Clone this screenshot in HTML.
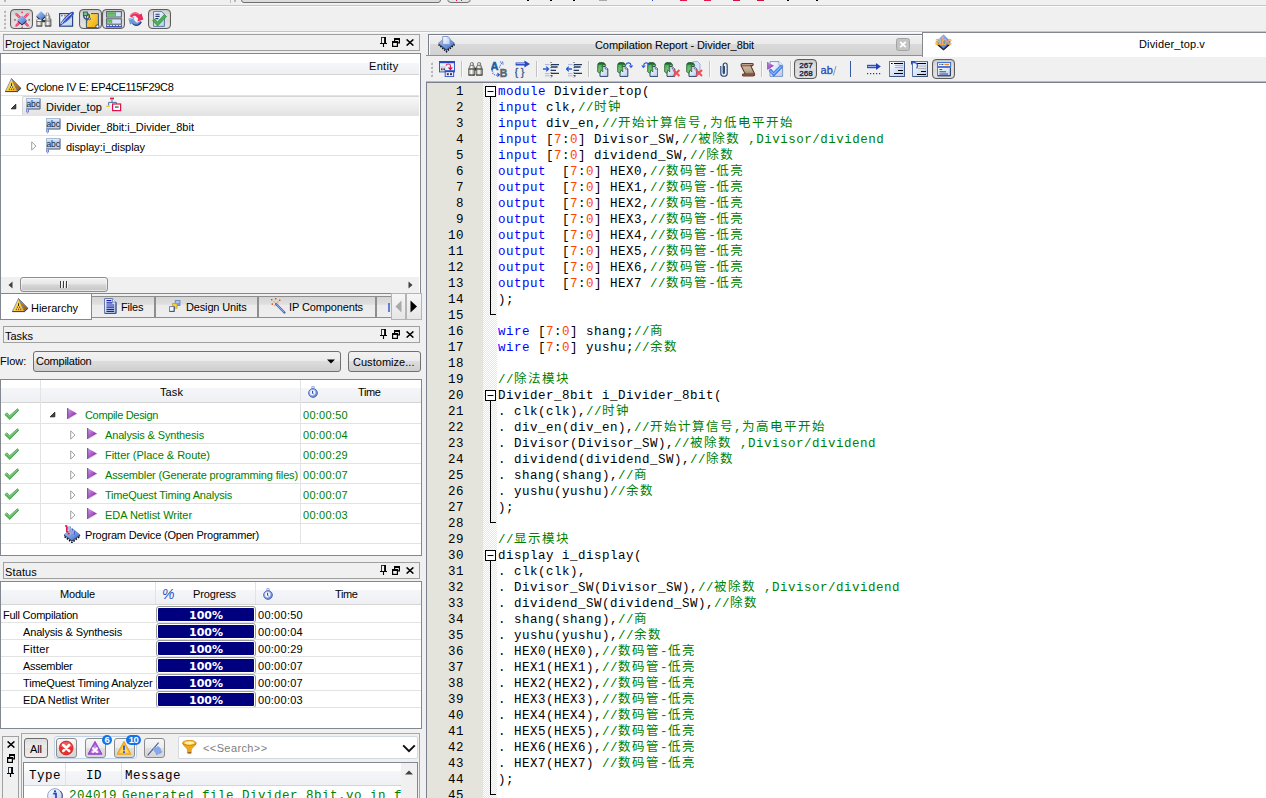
<!DOCTYPE html>
<html lang="zh"><head><meta charset="utf-8"><title>Quartus II</title>
<style>
*{box-sizing:border-box;margin:0;padding:0}
html,body{width:1266px;height:798px;overflow:hidden;background:#f0f0f0;}
body{position:relative;font-family:"Liberation Sans","Noto Sans CJK SC",sans-serif;font-size:11px;color:#000;}
.a{position:absolute}
.t{position:absolute;white-space:nowrap;line-height:14px;height:14px}
.box{position:absolute;border:1px solid #a0a0a0;background:#f0f0f0}
.panel{position:absolute;border:1px solid #828790;background:#fff}
.hl{position:absolute;height:1px;background:#e3e3e3}
.vl{position:absolute;width:1px;background:#e3e3e3}
.hdr{position:absolute;background:linear-gradient(#fff 0,#fff 36%,#f5f6f9 36%,#eef0f4 100%);border-bottom:1px solid #d5d5d5}
.hdr2{position:absolute;background:linear-gradient(#f5f6f9,#eef0f4);border-bottom:1px solid #d5d5d5}
.btnp{position:absolute;border:1px solid #8a8a8a;border-radius:3px;background:linear-gradient(#dcdcdc,#e8e8e8)}
.g{color:#008000}
.code{position:absolute;left:498px;font-family:"Liberation Mono","Noto Sans CJK SC",monospace;font-size:12.5px;letter-spacing:0.5px;line-height:16px;height:16px;white-space:pre;color:#000}
.ln{position:absolute;left:427px;width:37px;text-align:right;font-family:"Liberation Mono","Noto Sans CJK SC",monospace;font-size:12.5px;letter-spacing:0.5px;line-height:16px;height:16px;color:#000}
.k{color:#0000ff} .n{color:#ff4500} .c{color:#008000}
.cj{font-size:12.5px;letter-spacing:1.5px}
.pb{position:absolute;left:156px;width:100px;height:17px;border:1px solid #9a9a9a;border-radius:3px;background:#fff;padding:1px}
.pb i{display:block;width:100%;height:100%;background:#00007f;border-radius:1px}
.m{font-family:"Liberation Mono","Noto Sans CJK SC",monospace;font-size:12.5px;letter-spacing:0.5px}
.pbt{position:absolute;left:156px;width:100px;text-align:center;color:#fff;font-weight:bold;font-size:11px;line-height:17px;height:17px;font-family:"DejaVu Sans","Liberation Sans",sans-serif}
</style></head>
<body>
<div class="a" style="left:0;top:5px;width:1266px;height:1px;background:#c6c6c6"></div>
<div class="a" style="left:0;top:6px;width:1266px;height:1px;background:#fbfbfb"></div>
<div class="a" style="left:0;top:31px;width:1266px;height:1px;background:#c6c6c6"></div>
<div class="a" style="left:0;top:32px;width:1266px;height:1px;background:#fbfbfb"></div>
<div class="a" style="left:241px;top:-18px;width:200px;height:21px;border:1px solid #707070;border-radius:3px;background:#dcdcdc"></div>
<div class="a" style="left:447px;top:-18px;width:24px;height:21px;border:1px solid #707070;border-radius:4px;background:#e4e4e4"></div>
<div class="a" style="left:230px;top:0;width:1px;height:3px;background:#c0c0c0"></div>
<div class="a" style="left:4px;top:0;width:2px;height:2px;background:#b8b8b8"></div><div class="a" style="left:234px;top:0;width:2px;height:2px;background:#b8b8b8"></div>
<div class="a" style="left:527px;top:0;width:2px;height:1px;background:#000"></div>
<div class="a" style="left:550px;top:0;width:2px;height:1px;background:#000"></div>
<div class="a" style="left:573px;top:0;width:2px;height:1px;background:#000"></div>
<div class="a" style="left:599px;top:0;width:8px;height:1px;background:#a8a8a8"></div>
<div class="a" style="left:652px;top:0;width:1px;height:1px;background:#2848c8"></div>
<div class="a" style="left:680px;top:0;width:7px;height:1px;background:#e01848"></div>
<div class="a" style="left:704px;top:0;width:7px;height:1px;background:#e01848"></div>
<div class="a" style="left:733px;top:0;width:7px;height:1px;background:#d01040"></div>
<div class="a" style="left:757px;top:0;width:7px;height:1px;background:#d01040"></div>
<div class="a" style="left:787px;top:0;width:2px;height:1px;background:#000"></div>
<div class="a" style="left:816px;top:0;width:2px;height:1px;background:#000"></div>
<div class="a" style="left:456px;top:0;width:1px;height:1px;background:#e01848"></div>
<div class="a" style="left:461px;top:0;width:1px;height:1px;background:#e01848"></div>
<div class="box" style="left:3px;top:34px;width:417px;height:17px"></div>
<div class="t" style="left:5px;top:37px;letter-spacing:0.037px;">Project Navigator</div>
<div class="panel" style="left:0;top:53px;width:421px;height:241px"></div>
<div class="hdr2" style="left:1px;top:63px;width:418px;height:12px"></div>
<div class="t" style="left:369px;top:59px;letter-spacing:0.331px;">Entity</div>
<div class="t" style="left:26px;top:80px;letter-spacing:-0.327px;">Cyclone IV E: EP4CE115F29C8</div>
<div class="hl" style="left:1px;top:95px;width:418px"></div>
<div class="a" style="left:22px;top:96px;width:397px;height:20px;background:linear-gradient(#f8f8f8,#e3e3e3);border:1px solid #d6d6d6;border-right:none;border-radius:2px 0 0 2px"></div>
<div class="t" style="left:46px;top:100px;letter-spacing:0.033px;">Divider_top</div>
<div class="hl" style="left:1px;top:115px;width:418px"></div>
<div class="t" style="left:66px;top:120px;letter-spacing:0.008px;">Divider_8bit:i_Divider_8bit</div>
<div class="hl" style="left:1px;top:135px;width:418px"></div>
<div class="t" style="left:66px;top:140px;letter-spacing:-0.065px;">display:i_display</div>
<div class="hl" style="left:1px;top:155px;width:418px"></div>
<div class="a" style="left:1px;top:277px;width:418px;height:16px;background:#f0f0f0"></div>
<div class="a" style="left:20px;top:277px;width:88px;height:15px;border:1px solid #8e8e8e;border-radius:3px;background:linear-gradient(#f3f3f3,#e6e6e6 48%,#d6d6d6 52%,#c6c6c6);box-shadow:inset 0 0 0 1px rgba(255,255,255,.5)"></div>
<div class="a" style="left:91px;top:296px;width:64px;height:22px;border:1px solid #8e8e8e;background:linear-gradient(#d4d4d4,#dfdfdf 36%,#ebebeb 42%,#eeeeee)"></div>
<div class="a" style="left:155px;top:296px;width:103px;height:22px;border:1px solid #8e8e8e;background:linear-gradient(#d4d4d4,#dfdfdf 36%,#ebebeb 42%,#eeeeee)"></div>
<div class="a" style="left:258px;top:296px;width:118px;height:22px;border:1px solid #8e8e8e;background:linear-gradient(#d4d4d4,#dfdfdf 36%,#ebebeb 42%,#eeeeee)"></div>
<div class="a" style="left:376px;top:296px;width:17px;height:22px;border:1px solid #8e8e8e;background:linear-gradient(#d4d4d4,#dfdfdf 36%,#ebebeb 42%,#eeeeee)"></div>
<div class="a" style="left:0;top:294px;width:92px;height:26px;background:#fff;border:1px solid #828790;border-top:none"></div>
<div class="t" style="left:31px;top:301px;letter-spacing:-0.009px;">Hierarchy</div>
<div class="t" style="left:121px;top:300px;letter-spacing:-0.187px;">Files</div>
<div class="t" style="left:186px;top:300px;letter-spacing:-0.155px;">Design Units</div>
<div class="t" style="left:289px;top:300px;letter-spacing:-0.125px;">IP Components</div>
<div class="a" style="left:391px;top:293px;width:15px;height:27px;border:1px solid #b4b4b4;background:linear-gradient(#f6f6f6,#e6e6e6)"></div>
<div class="a" style="left:406px;top:293px;width:16px;height:27px;border:1px solid #b4b4b4;background:linear-gradient(#f6f6f6,#e6e6e6)"></div>
<svg class="a" style="left:395px;top:300px" width="7" height="13" viewBox="0 0 7 13"><path d="M6.5 .5V12.5L.5 6.5Z" fill="#a8a8a8"/></svg>
<svg class="a" style="left:410px;top:300px" width="8" height="13" viewBox="0 0 8 13"><path d="M.5 .5V12.5L7 6.5Z" fill="#000"/></svg>
<svg class="a" style="left:8px;top:281px" width="5" height="8" viewBox="0 0 5 8"><path d="M4.5 .5V7.5L.5 4Z" fill="#404040"/></svg>
<svg class="a" style="left:408px;top:281px" width="5" height="8" viewBox="0 0 5 8"><path d="M.5 .5V7.5L4.5 4Z" fill="#404040"/></svg>
<svg class="a" style="left:60px;top:281px" width="9" height="7" viewBox="0 0 9 7"><path d="M.5 0V7M3.5 0V7M6.5 0V7" stroke="#3c3c3c" stroke-width="1"/><path d="M1.5 0V7M4.5 0V7M7.5 0V7" stroke="#f8f8f8" stroke-width="1"/></svg>
<div class="box" style="left:3px;top:326px;width:417px;height:17px"></div>
<div class="t" style="left:5px;top:329px;letter-spacing:-0.025px;">Tasks</div>
<div class="t" style="left:0px;top:354px;">Flow:</div>
<div class="a" style="left:33px;top:351px;width:308px;height:21px;border:1px solid #707070;border-radius:3px;background:linear-gradient(#f2f2f2,#ebebeb 50%,#dddddd 50%,#cfcfcf)"></div>
<div class="t" style="left:36px;top:354px;letter-spacing:-0.236px;">Compilation</div>
<svg class="a" style="left:327px;top:359px" width="8" height="5" viewBox="0 0 8 5"><path d="M0 .5H8L4 4.5Z" fill="#000"/></svg>
<div class="a" style="left:348px;top:351px;width:73px;height:21px;border:1px solid #707070;border-radius:3px;background:linear-gradient(#f2f2f2,#ebebeb 50%,#dddddd 50%,#cfcfcf)"></div>
<div class="t" style="left:353px;top:355px;letter-spacing:0.030px;">Customize...</div>
<div class="panel" style="left:0;top:379px;width:422px;height:177px"></div>
<div class="hdr" style="left:1px;top:380px;width:420px;height:23px"></div>
<div class="t" style="left:160px;top:385px;letter-spacing:0.094px;">Task</div>
<div class="t" style="left:358px;top:385px;letter-spacing:-0.387px;">Time</div>
<div class="t" style="left:85px;top:408px;letter-spacing:-0.333px;color:#008000">Compile Design</div>
<div class="t" style="left:303px;top:408px;letter-spacing:0.271px;color:#008000">00:00:50</div>
<div class="t" style="left:105px;top:428px;letter-spacing:-0.155px;color:#008000">Analysis &amp; Synthesis</div>
<div class="t" style="left:303px;top:428px;letter-spacing:0.271px;color:#008000">00:00:04</div>
<div class="t" style="left:105px;top:448px;letter-spacing:-0.035px;color:#008000">Fitter (Place &amp; Route)</div>
<div class="t" style="left:303px;top:448px;letter-spacing:0.271px;color:#008000">00:00:29</div>
<div class="t" style="left:105px;top:468px;letter-spacing:-0.150px;color:#008000">Assembler (Generate programming files)</div>
<div class="t" style="left:303px;top:468px;letter-spacing:0.271px;color:#008000">00:00:07</div>
<div class="t" style="left:105px;top:488px;letter-spacing:-0.210px;color:#008000">TimeQuest Timing Analysis</div>
<div class="t" style="left:303px;top:488px;letter-spacing:0.271px;color:#008000">00:00:07</div>
<div class="t" style="left:105px;top:508px;letter-spacing:-0.045px;color:#008000">EDA Netlist Writer</div>
<div class="t" style="left:303px;top:508px;letter-spacing:0.271px;color:#008000">00:00:03</div>
<div class="t" style="left:85px;top:528px;letter-spacing:-0.198px;">Program Device (Open Programmer)</div>
<div class="hl" style="left:1px;top:423px;width:420px"></div>
<div class="hl" style="left:1px;top:443px;width:420px"></div>
<div class="hl" style="left:1px;top:463px;width:420px"></div>
<div class="hl" style="left:1px;top:483px;width:420px"></div>
<div class="hl" style="left:1px;top:503px;width:420px"></div>
<div class="hl" style="left:1px;top:523px;width:420px"></div>
<div class="hl" style="left:1px;top:543px;width:420px"></div>
<div class="vl" style="left:40px;top:380px;height:164px"></div>
<div class="vl" style="left:300px;top:380px;height:164px"></div>
<div class="box" style="left:3px;top:562px;width:417px;height:17px"></div>
<div class="t" style="left:5px;top:565px;letter-spacing:0.135px;">Status</div>
<div class="panel" style="left:0;top:581px;width:422px;height:148px"></div>
<div class="hdr" style="left:1px;top:582px;width:420px;height:23px"></div>
<div class="vl" style="left:155px;top:582px;height:22px"></div><div class="vl" style="left:255px;top:582px;height:22px"></div>
<svg class="a" style="left:162px;top:587px" width="13" height="14" viewBox="0 0 13 14"><text x="0" y="12" font-family="Liberation Sans,sans-serif" font-style="italic" font-size="14" fill="#3050c0">%</text></svg>
<div class="t" style="left:60px;top:587px;letter-spacing:-0.180px;">Module</div>
<div class="t" style="left:193px;top:587px;letter-spacing:-0.129px;">Progress</div>
<div class="t" style="left:335px;top:587px;letter-spacing:-0.387px;">Time</div>
<div class="t" style="left:3px;top:608px;letter-spacing:-0.242px;">Full Compilation</div>
<div class="t" style="left:258px;top:608px;letter-spacing:0.271px;">00:00:50</div>
<div class="pb" style="top:606px"><i></i></div>
<div class="pbt" style="top:607px">100%</div>
<div class="hl" style="left:1px;top:622px;width:420px"></div>
<div class="t" style="left:23px;top:625px;letter-spacing:-0.155px;">Analysis &amp; Synthesis</div>
<div class="t" style="left:258px;top:625px;letter-spacing:0.271px;">00:00:04</div>
<div class="pb" style="top:623px"><i></i></div>
<div class="pbt" style="top:624px">100%</div>
<div class="hl" style="left:1px;top:639px;width:420px"></div>
<div class="t" style="left:23px;top:642px;letter-spacing:0.240px;">Fitter</div>
<div class="t" style="left:258px;top:642px;letter-spacing:0.271px;">00:00:29</div>
<div class="pb" style="top:640px"><i></i></div>
<div class="pbt" style="top:641px">100%</div>
<div class="hl" style="left:1px;top:656px;width:420px"></div>
<div class="t" style="left:23px;top:659px;letter-spacing:-0.274px;">Assembler</div>
<div class="t" style="left:258px;top:659px;letter-spacing:0.271px;">00:00:07</div>
<div class="pb" style="top:657px"><i></i></div>
<div class="pbt" style="top:658px">100%</div>
<div class="hl" style="left:1px;top:673px;width:420px"></div>
<div class="t" style="left:23px;top:676px;letter-spacing:-0.184px;">TimeQuest Timing Analyzer</div>
<div class="t" style="left:258px;top:676px;letter-spacing:0.271px;">00:00:07</div>
<div class="pb" style="top:674px"><i></i></div>
<div class="pbt" style="top:675px">100%</div>
<div class="hl" style="left:1px;top:690px;width:420px"></div>
<div class="t" style="left:23px;top:693px;letter-spacing:-0.073px;">EDA Netlist Writer</div>
<div class="t" style="left:258px;top:693px;letter-spacing:0.271px;">00:00:03</div>
<div class="pb" style="top:691px"><i></i></div>
<div class="pbt" style="top:692px">100%</div>
<div class="hl" style="left:1px;top:707px;width:420px"></div>
<div class="a" style="left:2px;top:736px;width:17px;height:70px;border:1px solid #a0a0a0;background:#f0f0f0"></div>
<svg class="a" style="left:7px;top:741px" width="8" height="7" viewBox="0 0 8 7"><path d="M.6 .4L7.4 6.6M7.4 .4L.6 6.6" stroke="#000" stroke-width="1.45"/></svg>
<svg class="a" style="left:7px;top:754px" width="8" height="9" viewBox="0 0 8 9"><path d="M2.6 3V.9H7.4V4.9H6" fill="none" stroke="#000" stroke-width="1.2"/><path d="M2 1H8" stroke="#000" stroke-width="2"/><rect x=".6" y="3.6" width="4.8" height="4.8" fill="#f4f4f4" stroke="#000" stroke-width="1.2"/><path d="M0 4H6" stroke="#000" stroke-width="2"/></svg>
<svg class="a" style="left:7px;top:767px" width="8" height="10" viewBox="0 0 8 10"><rect x="1.5" y=".5" width="4" height="6" fill="#f4f4f4" stroke="#28343c" stroke-width="1"/><path d="M5 0V6.5" stroke="#000" stroke-width="1.8"/><path d="M0 6.5H7M3.5 7V10" stroke="#000" stroke-width="1.1"/></svg>
<div class="a" style="left:21px;top:733px;width:399px;height:70px;background:#f0f0f0;border:1px solid #a8a8a8"></div>
<div class="a" style="left:24px;top:738px;width:24px;height:20px;border:1px solid #6c6c6c;border-radius:3px;background:linear-gradient(#dcdcdc,#ececec 45%,#e4e4e4 55%,#eeeeee)"></div>
<div class="t" style="left:30px;top:742px;letter-spacing:-0.078px;">All</div>
<div class="a" style="left:54px;top:736px;width:83px;height:23px;border:1px solid #c4d4e8;border-radius:3px;background:#f6f8fb"></div>
<div class="a" style="left:56px;top:738px;width:21px;height:20px;border:1px solid #8c8c8c;border-radius:3px;background:linear-gradient(#f6f6f6,#ececec 48%,#dedede 52%,#d6d6d6)"></div>
<div class="a" style="left:85px;top:738px;width:21px;height:20px;border:1px solid #8c8c8c;border-radius:3px;background:linear-gradient(#f6f6f6,#ececec 48%,#dedede 52%,#d6d6d6)"></div>
<div class="a" style="left:114px;top:738px;width:21px;height:20px;border:1px solid #8c8c8c;border-radius:3px;background:linear-gradient(#f6f6f6,#ececec 48%,#dedede 52%,#d6d6d6)"></div>
<div class="a" style="left:144px;top:738px;width:21px;height:20px;border:1px solid #8c8c8c;border-radius:3px;background:linear-gradient(#f6f6f6,#ececec 48%,#dedede 52%,#d6d6d6)"></div>
<svg class="a" style="left:58px;top:740px" width="16" height="16" viewBox="0 0 16 16"><circle cx="8.2" cy="8" r="6.9" fill="#ee2c2c" stroke="#c02020" stroke-width=".7"/><path d="M2.4 6.4A6 6 0 0 1 14 6.4Q8.2 9 2.4 6.4Z" fill="#ff8080" opacity=".55"/><path d="M5.2 5L11.2 11M11.2 5L5.2 11" stroke="#fff" stroke-width="2.5" stroke-linecap="round"/></svg>
<svg class="a" style="left:87px;top:740px" width="16" height="16" viewBox="0 0 16 16"><path d="M8 1.4L15 14.2H1Z" fill="#a858d8" stroke="#9040c8" stroke-width="1" stroke-linejoin="round"/><path d="M8 4.4L12.6 12.8H3.4Z" fill="#c898ec"/><path d="M5.4 7.6L10.6 12.6M10.6 7.6L5.4 12.6" stroke="#fff" stroke-width="1.9"/></svg>
<svg class="a" style="left:116px;top:740px" width="16" height="16" viewBox="0 0 16 16"><path d="M8 1.4L15 14.2H1Z" fill="#fbb828" stroke="#f0a010" stroke-width="1" stroke-linejoin="round"/><path d="M8 4.4L12.6 12.8H3.4Z" fill="#ffd868"/><path d="M8 5.6V10.2" stroke="#3468d8" stroke-width="2"/><rect x="7" y="11.2" width="2" height="1.8" fill="#3468d8"/></svg>
<svg class="a" style="left:147px;top:740px" width="16" height="16" viewBox="0 0 16 16"><path d="M.6 15.4L11.6 2.6" stroke="#4c5c88" stroke-width="1.1"/><path d="M5.8 8.6C7.4 6.6 9.2 9 11 6.4L12.6 7.8C14 9 13 10.6 14.8 11.6C13.6 14.6 11.4 12.6 9.8 15C8.6 13.6 9.4 12.4 7.8 11.6Z" fill="#86a8ec" stroke="#6c90e0" stroke-width=".6"/></svg>
<div class="a" style="left:102px;top:735px;width:10px;height:10px;border-radius:5px;background:#1274ea;color:#fff;font-size:9.5px;line-height:10px;text-align:center;letter-spacing:-.5px;font-weight:bold">6</div>
<div class="a" style="left:126px;top:735px;width:15px;height:10px;border-radius:5px;background:#1274ea;color:#fff;font-size:9.5px;line-height:10px;text-align:center;letter-spacing:-.5px;font-weight:bold">10</div>
<div class="a" style="left:178px;top:736px;width:240px;height:23px;border:1px solid #d4d8e0;border-radius:2px;background:#fff"></div>
<svg class="a" style="left:182px;top:740px" width="15" height="14" viewBox="0 0 15 14"><ellipse cx="7.4" cy="3" rx="6.8" ry="2.6" fill="#f8c030" stroke="#d08a10" stroke-width=".9"/><path d="M.8 3.6C2 7 5.6 8 5.6 10V12.8H9.2V10C9.2 8 12.8 7 14 3.6C10 6 4.8 6 .8 3.6Z" fill="#f0a818" stroke="#c07808" stroke-width=".6"/><ellipse cx="7.4" cy="3" rx="4.6" ry="1.4" fill="#fff0b0"/><rect x="5.6" y="12" width="3.6" height="1.6" fill="#a86418"/></svg>
<svg class="a" style="left:402px;top:744px" width="14" height="9" viewBox="0 0 14 9"><path d="M1.2 1.4L7 7.2L12.8 1.4" fill="none" stroke="#101010" stroke-width="2"/></svg>
<div class="t" style="left:203px;top:741px;letter-spacing:0.394px;color:#808080">&lt;&lt;Search&gt;&gt;</div>
<div class="a" style="left:23px;top:762px;width:395px;height:40px;background:#fff;border:1px solid #828790"></div>
<div class="hdr" style="left:24px;top:763px;width:377px;height:23px"></div>
<div class="vl" style="left:65px;top:763px;height:22px"></div><div class="vl" style="left:121px;top:763px;height:22px"></div>
<div class="a" style="left:401px;top:763px;width:16px;height:40px;background:#f0f0f0"></div>
<svg class="a" style="left:405px;top:770px" width="8" height="5" viewBox="0 0 8 5"><path d="M0 4.5H8L4 .5Z" fill="#404040"/></svg>
<div class="t m" style="left:29px;top:769px;">Type</div>
<div class="t m" style="left:86px;top:769px;">ID</div>
<div class="t m" style="left:125px;top:769px;">Message</div>
<div class="t m" style="left:69px;top:789px;color:#008000">204019</div>
<div class="t m" style="left:122px;top:789px;color:#008000">Generated file Divider_8bit.vo in f</div>
<svg class="a" style="left:47px;top:788px" width="16" height="16" viewBox="0 0 16 16"><circle cx="8" cy="8" r="7.4" fill="url(#gDoc)" stroke="#8ea4c8" stroke-width="1"/><path d="M13.4 3A7.4 7.4 0 0 1 13.4 13" fill="none" stroke="#3c4c70" stroke-width="1"/><rect x="7" y="2.4" width="2" height="1.9" fill="#2444c0"/><path d="M6.2 5.6H9V12.6M5.8 12.8H10.4" stroke="#2444c0" stroke-width="1.7" fill="none"/></svg>
<div class="a" style="left:426px;top:55px;width:497px;height:1px;background:#909090"></div>
<div class="a" style="left:428px;top:34px;width:495px;height:21px;border:1px solid #787e8c;border-bottom:none;background:linear-gradient(#efefef,#ebebeb 44%,#dadada 47%,#d1d1d1);box-shadow:inset 1px 1px 0 #fafafa"></div>
<div class="t" style="left:595px;top:38px;letter-spacing:-0.091px;">Compilation Report - Divider_8bit</div>
<div class="a" style="left:922px;top:32px;width:346px;height:25px;border:1px solid #84878e;border-bottom:none;background:#fff"></div>
<div class="t" style="left:1139px;top:37px;letter-spacing:0.138px;">Divider_top.v</div>
<svg class="a" style="left:438px;top:36px" width="17" height="17" viewBox="0 0 17 17"><path d="M8.5 2.6L16.6 8.4L8.5 15.6L.4 8.4Z" fill="none" stroke="#05080e" stroke-width="1.6" stroke-dasharray="1.4 1.1"/><path d="M8.5 2L16.4 8.2L8.5 14.8L.6 8.2Z" fill="#0c1424"/>
<path d="M8.5 .6L16.6 7.2L8.5 13.8L.4 7.2Z" fill="url(#gBlue)" stroke="#5070b8" stroke-width=".5"/>
<path d="M4.7 .5H10L12 2.4V8.6H4.7Z" fill="url(#gDoc)" stroke="#7c94c4" stroke-width=".9"/><path d="M10 .5V2.4H12" fill="#fff" stroke="#7c94c4" stroke-width=".6"/></svg>
<svg class="a" style="left:896px;top:38px" width="14" height="13" viewBox="0 0 14 13"><rect x=".5" y=".5" width="13" height="12" rx="2" fill="#c4c4c4" stroke="#a4a4a4" stroke-width="1"/><path d="M4.2 3.8L9.8 9.2M9.8 3.8L4.2 9.2" stroke="#fff" stroke-width="1.8"/></svg>
<svg class="a" style="left:935px;top:34px" width="17" height="17" viewBox="0 0 17 17"><path d="M8.5 5L15.4 10.6L8.5 16.4L1.6 10.6Z" fill="#0c1424"/><path d="M8.5 .8L15.6 8L8.5 14.8L1.4 8Z" fill="url(#gBlue)" stroke="#5070b0" stroke-width=".5"/>
<text x="8.6" y="11.4" font-family="Liberation Sans,sans-serif" font-size="10.5" fill="#f6b020" text-anchor="middle" textLength="16.5" lengthAdjust="spacingAndGlyphs" stroke="#f6b020" stroke-width=".3">abc</text></svg>
<svg class="a" style="left:431px;top:62px" width="3" height="16" viewBox="0 0 3 16"><rect x="0" y="1" width="2" height="2" fill="#b8b8b8"/><rect x="1" y="0" width="1" height="1" fill="#d8d8d8"/><rect x="0" y="5" width="2" height="2" fill="#b8b8b8"/><rect x="1" y="4" width="1" height="1" fill="#d8d8d8"/><rect x="0" y="9" width="2" height="2" fill="#b8b8b8"/><rect x="1" y="8" width="1" height="1" fill="#d8d8d8"/><rect x="0" y="13" width="2" height="2" fill="#b8b8b8"/><rect x="1" y="12" width="1" height="1" fill="#d8d8d8"/></svg>
<svg class="a" style="left:439px;top:61px" width="16" height="16" viewBox="0 0 16 16"><rect x=".5" y=".5" width="15" height="10.4" fill="#e8f0ff" stroke="#3858c8" stroke-width="1"/><rect x="0" y="0" width="16" height="2.2" fill="#2848c8"/>
<rect x="1.4" y="5" width="5.4" height="4.8" fill="#d8d8d8"/><rect x="2" y="7.4" width="1.6" height="1.8" fill="#404858"/><rect x="4.4" y="7.4" width="1.6" height="1.8" fill="#404858"/>
<path d="M7 4.6C7.6 2.6 11.4 2.6 11.4 4.4V7" fill="none" stroke="#e02050" stroke-width="1.1"/><path d="M8.8 6.4H14L11.4 9.6Z" fill="#d01040"/>
<rect x="6.2" y="10" width="8.4" height="5.6" fill="#f4f8ff" stroke="#3858c8" stroke-width="1"/><rect x="5.8" y="9.4" width="9.2" height="1.8" fill="#2848c8"/>
<rect x="7.8" y="12.2" width="2" height="2" fill="#303848"/><rect x="11" y="12.2" width="2" height="2" fill="#303848"/></svg>
<div class="a" style="left:461px;top:61px;width:1px;height:16px;background:#c2c2c2"></div><div class="a" style="left:462px;top:61px;width:1px;height:16px;background:#fafafa"></div>
<svg class="a" style="left:468px;top:62px" width="15" height="14" viewBox="0 0 15 14"><rect x="2.4" y=".5" width="3" height="3.2" rx="1.2" fill="url(#gGray)" stroke="#63635d" stroke-width=".7"/><rect x="9.6" y=".5" width="3" height="3.2" rx="1.2" fill="url(#gGray)" stroke="#63635d" stroke-width=".7"/>
<path d="M1.8 3.6H6L7 7H.8Z" fill="url(#gGray)" stroke="#63635d" stroke-width=".7"/><path d="M9 3.6H13.2L14.2 7H8Z" fill="url(#gGray)" stroke="#63635d" stroke-width=".7"/>
<rect x=".5" y="6.6" width="6.4" height="6.8" rx=".8" fill="url(#gGray)" stroke="#63635d" stroke-width=".7"/><rect x="8.1" y="6.6" width="6.4" height="6.8" rx=".8" fill="url(#gGray)" stroke="#63635d" stroke-width=".7"/>
<rect x="6.6" y="5.6" width="1.8" height="3" fill="#3a3a3a"/><rect x=".5" y="12.4" width="6.4" height="1.1" fill="#45453f"/><rect x="8.1" y="12.4" width="6.4" height="1.1" fill="#45453f"/>
<rect x=".6" y="6.8" width="6.2" height=".9" fill="#55554f"/><rect x="8.2" y="6.8" width="6.2" height=".9" fill="#55554f"/></svg>
<svg class="a" style="left:491px;top:61px" width="17" height="17" viewBox="0 0 17 17"><text x="-.4" y="8.6" font-family="Liberation Sans,sans-serif" font-weight="bold" font-size="11" fill="#1660a8" stroke="#1660a8" stroke-width=".5">A</text>
<text x="8.8" y="16" font-family="Liberation Sans,sans-serif" font-weight="bold" font-size="10.5" fill="#5a666e" stroke="#5a666e" stroke-width=".4">B</text>
<path d="M1.4 9.6C1.4 13.2 3.6 14.6 7 14" fill="none" stroke="#2858d8" stroke-width="1.2" stroke-dasharray="1 1.1"/><path d="M6.4 11.4L9.4 13.8L6.4 16.2Z" fill="#2858d8"/>
<path d="M8.6 6.6C8.8 4.6 9.6 3.2 11 2" fill="none" stroke="#2858d8" stroke-width="1.1" stroke-dasharray="1 1.1"/><path d="M9 1H12V4" fill="none" stroke="#2858d8" stroke-width="1.1" stroke-dasharray="1 .8"/></svg>
<svg class="a" style="left:515px;top:60px" width="16" height="18" viewBox="0 0 16 18"><path d="M.6 2.6H9.4V.4L15 4L9.4 7.6V5.4H.6Z" fill="#2848c0"/><path d="M1.4 3.6H10" stroke="#a8c0f8" stroke-width=".9"/>
<text x="-.6" y="15.6" font-family="Liberation Sans,sans-serif" font-size="11" fill="#3c5a88" stroke="#3c5a88" stroke-width=".3">{</text><text x="5.8" y="15.6" font-family="Liberation Sans,sans-serif" font-size="11" fill="#3c5a88" stroke="#3c5a88" stroke-width=".3">}</text></svg>
<div class="a" style="left:536px;top:61px;width:1px;height:16px;background:#c2c2c2"></div><div class="a" style="left:537px;top:61px;width:1px;height:16px;background:#fafafa"></div>
<svg class="a" style="left:543px;top:62px" width="16" height="16" viewBox="0 0 16 16"><path d="M0 7H5.4M3.2 4.6L5.6 7L3.2 9.4" fill="none" stroke="#2858d8" stroke-width="1.3"/><path d="M8 0V16" stroke="#28406c" stroke-width="1" stroke-dasharray="1 1.6"/>
<g stroke="#a8b8d8" stroke-width="1"><path d="M2 2.6H6.6M2 11.6H6.6M2 13.8H6.6"/></g>
<g stroke="#20385c" stroke-width="1.3"><path d="M8 2.6H16M8 5H14.6M8 8.4H13M8 11.4H16M8 13.8H9.6"/></g></svg>
<svg class="a" style="left:566px;top:62px" width="16" height="16" viewBox="0 0 16 16"><path d="M6 7H.6M2.8 4.6L.4 7L2.8 9.4" fill="none" stroke="#2858d8" stroke-width="1.3"/><path d="M8 0V16" stroke="#28406c" stroke-width="1" stroke-dasharray="1 1.6"/>
<g stroke="#a8b8d8" stroke-width="1"><path d="M2 2.6H6.6M2 11.6H6.6M2 13.8H6.6"/></g>
<g stroke="#20385c" stroke-width="1.3"><path d="M8 2.6H16M8 5H14.6M8 8.4H13M8 11.4H16M8 13.8H9.6"/></g></svg>
<div class="a" style="left:588px;top:61px;width:1px;height:16px;background:#c2c2c2"></div><div class="a" style="left:589px;top:61px;width:1px;height:16px;background:#fafafa"></div>
<svg class="a" style="left:597px;top:62px" width="12" height="15" viewBox="0 0 12 15"><path d="M3 4.4H8.2L10.8 7V14.4H3Z" fill="url(#gDoc)" stroke="#2c4468" stroke-width="1"/><path d="M8.2 4.4V7H10.8" fill="#fff" stroke="#2c4468" stroke-width=".7"/><path d="M.6 3.6C.6 1 2 .5 3.8 .5H5.6C7.4 .7 8.4 1.8 8.8 3.6L5.8 2.6V10L4.2 8.2L2.6 11.2L.6 9.8Z" fill="url(#gGreen)" stroke="#0c4a18" stroke-width=".6"/><path d="M2.2 3V8.6M3.8 3V7" stroke="#9cdc9c" stroke-width=".8" opacity=".7"/></svg>
<svg class="a" style="left:617px;top:62px" width="17" height="15" viewBox="0 0 17 15"><path d="M3 4.4H8.2L10.8 7V14.4H3Z" fill="url(#gDoc)" stroke="#2c4468" stroke-width="1"/><path d="M8.2 4.4V7H10.8" fill="#fff" stroke="#2c4468" stroke-width=".7"/><path d="M.6 3.6C.6 1 2 .5 3.8 .5H5.6C7.4 .7 8.4 1.8 8.8 3.6L5.8 2.6V10L4.2 8.2L2.6 11.2L.6 9.8Z" fill="url(#gGreen)" stroke="#0c4a18" stroke-width=".6"/><path d="M2.2 3V8.6M3.8 3V7" stroke="#9cdc9c" stroke-width=".8" opacity=".7"/><path d="M9 2.6C10 .2 13.6 .2 14 3.4" fill="none" stroke="#2858d8" stroke-width="1.2"/><path d="M11.8 3.4H16.4L14 6.2Z" fill="#2858d8"/></svg>
<svg class="a" style="left:641px;top:62px" width="17" height="15" viewBox="0 0 17 15"><g transform="translate(6,0)"><path d="M3 4.4H8.2L10.8 7V14.4H3Z" fill="url(#gDoc)" stroke="#2c4468" stroke-width="1"/><path d="M8.2 4.4V7H10.8" fill="#fff" stroke="#2c4468" stroke-width=".7"/><path d="M.6 3.6C.6 1 2 .5 3.8 .5H5.6C7.4 .7 8.4 1.8 8.8 3.6L5.8 2.6V10L4.2 8.2L2.6 11.2L.6 9.8Z" fill="url(#gGreen)" stroke="#0c4a18" stroke-width=".6"/><path d="M2.2 3V8.6M3.8 3V7" stroke="#9cdc9c" stroke-width=".8" opacity=".7"/></g><path d="M7.6 2.4C6.6 .2 3 .2 2.6 3.4" fill="none" stroke="#2858d8" stroke-width="1.2"/><path d="M.2 3.4H4.8L2.4 6.2Z" fill="#2858d8"/></svg>
<svg class="a" style="left:664px;top:62px" width="17" height="15" viewBox="0 0 17 15"><path d="M3 4.4H8.2L10.8 7V14.4H3Z" fill="url(#gDoc)" stroke="#2c4468" stroke-width="1"/><path d="M8.2 4.4V7H10.8" fill="#fff" stroke="#2c4468" stroke-width=".7"/><path d="M.6 3.6C.6 1 2 .5 3.8 .5H5.6C7.4 .7 8.4 1.8 8.8 3.6L5.8 2.6V10L4.2 8.2L2.6 11.2L.6 9.8Z" fill="url(#gGreen)" stroke="#0c4a18" stroke-width=".6"/><path d="M2.2 3V8.6M3.8 3V7" stroke="#9cdc9c" stroke-width=".8" opacity=".7"/><g transform="translate(8.4,7)"><path d="M1 1L7 7M7 1L1 7" stroke="#f05058" stroke-width="2.1"/></g></svg>
<svg class="a" style="left:686px;top:61px" width="17" height="16" viewBox="0 0 17 16"><path d="M7 .6H11.6L14 3V11H7Z" fill="#d8e4f8" stroke="#90a4c8" stroke-width=".8"/><g transform="translate(0,1)"><path d="M3 4.4H8.2L10.8 7V14.4H3Z" fill="url(#gDoc)" stroke="#2c4468" stroke-width="1"/><path d="M8.2 4.4V7H10.8" fill="#fff" stroke="#2c4468" stroke-width=".7"/><path d="M.6 3.6C.6 1 2 .5 3.8 .5H5.6C7.4 .7 8.4 1.8 8.8 3.6L5.8 2.6V10L4.2 8.2L2.6 11.2L.6 9.8Z" fill="url(#gGreen)" stroke="#0c4a18" stroke-width=".6"/><path d="M2.2 3V8.6M3.8 3V7" stroke="#9cdc9c" stroke-width=".8" opacity=".7"/></g><g transform="translate(9,8)"><path d="M1 1L7 7M7 1L1 7" stroke="#f05058" stroke-width="2.1"/></g></svg>
<div class="a" style="left:709px;top:61px;width:1px;height:16px;background:#c2c2c2"></div><div class="a" style="left:710px;top:61px;width:1px;height:16px;background:#fafafa"></div>
<svg class="a" style="left:720px;top:62px" width="8" height="15" viewBox="0 0 8 15"><path d="M4.4 4V10.6C4.4 12 3.2 12 3.2 10.6V3.4C3.2 .2 7.2 .2 7.2 3.4V11.4C7.2 15.2 .8 15.2 .8 11.4V4" fill="none" stroke="#2c4c7c" stroke-width="1.2"/></svg>
<svg class="a" style="left:740px;top:62px" width="16" height="15" viewBox="0 0 16 15"><path d="M2.6 1.6H12.4C13.6 1.8 13.4 3.4 12.2 3.6H10.6L14.4 11.4C15.2 13.4 14 14 12.8 14H3.4C2 13.8 2.2 12 3.6 12H5.2L1.4 4.2C.6 2.6 1.4 1.6 2.6 1.6Z" fill="url(#gScroll)" stroke="#6c3628" stroke-width="1.1" stroke-linejoin="round"/>
<path d="M1.6 3.8H10.6M5.2 12H14.2" stroke="#6c3628" stroke-width=".9"/></svg>
<div class="a" style="left:761px;top:61px;width:1px;height:16px;background:#c2c2c2"></div><div class="a" style="left:762px;top:61px;width:1px;height:16px;background:#fafafa"></div>
<svg class="a" style="left:767px;top:61px" width="17" height="16" viewBox="0 0 17 16"><path d="M3 .6H12L15.6 4.2V15.4H3Z" fill="url(#gDoc)" stroke="#7090c4" stroke-width=".9"/><path d="M12 .6V4.2H15.6" fill="#fff" stroke="#7090c4" stroke-width=".7"/>
<path d="M.8 1.2L7 4.8L.8 8.4Z" fill="url(#gPurple)"/><path d="M.7 1V8.6" stroke="#3c4c90" stroke-width=".8"/>
<path d="M2 9.8L4 8L6.6 11L13.8 4L15.8 6L6.8 15.4Z" fill="#4c88f0" stroke="#3468d8" stroke-width=".6"/><path d="M3.4 9.8L6.6 13L14.2 5.4" stroke="#b0d0ff" stroke-width=".9" fill="none"/></svg>
<div class="a" style="left:790px;top:61px;width:1px;height:16px;background:#c2c2c2"></div><div class="a" style="left:791px;top:61px;width:1px;height:16px;background:#fafafa"></div>
<div class="a" style="left:794px;top:59px;width:23px;height:20px;border:1px solid #5c5c5c;border-radius:4px;background:linear-gradient(#cfcfcf,#e2e2e2 45%,#d9d9d9 55%,#e6e6e6);box-shadow:inset 0 0 1px 0 rgba(0,0,0,.45)"></div>
<svg class="a" style="left:798px;top:61px" width="16" height="16" viewBox="0 0 16 16"><text x="8" y="7.4" font-family="Liberation Sans,sans-serif" font-size="8" fill="#1c3050" stroke="#1c3050" stroke-width=".4" text-anchor="middle" textLength="13.4" lengthAdjust="spacingAndGlyphs">267</text>
<text x="8" y="15.4" font-family="Liberation Sans,sans-serif" font-size="8" fill="#1c3050" stroke="#1c3050" stroke-width=".4" text-anchor="middle" textLength="13.4" lengthAdjust="spacingAndGlyphs">268</text></svg>
<svg class="a" style="left:821px;top:63px" width="16" height="14" viewBox="0 0 16 14"><text x="-.4" y="11.4" font-family="Liberation Sans,sans-serif" font-size="11" fill="#2848c0" stroke="#2848c0" stroke-width=".3">ab</text><path d="M15 3L12.4 12.4" stroke="#8c98b4" stroke-width="1"/></svg>
<div class="a" style="left:850px;top:61px;width:1px;height:16px;background:#3858a8"></div>
<svg class="a" style="left:867px;top:63px" width="14" height="12" viewBox="0 0 14 12"><path d="M0 1.8H9.6V5.2H0Z" fill="#2c4cc8"/><path d="M.8 3.5H9.6" stroke="#9cb4f4" stroke-width="1"/><path d="M9 0L13.8 3.5L9 7Z" fill="#2440b8"/><g fill="#203880"><rect x="0" y="10" width="1.2" height="1.2"/><rect x="3" y="10" width="1.2" height="1.2"/><rect x="6" y="10" width="1.2" height="1.2"/><rect x="9" y="10" width="1.2" height="1.2"/><rect x="12" y="10" width="1.2" height="1.2"/></g></svg>
<svg class="a" style="left:889px;top:61px" width="16" height="16" viewBox="0 0 16 16"><rect x=".5" y=".5" width="15" height="15" fill="url(#gDoc)" stroke="#5c78a8" stroke-width="1"/><path d="M15.5 1V15.5H1" fill="none" stroke="#3c5480" stroke-width="1"/>
<g stroke="#b4b8b4" stroke-width="1"><path d="M6 4.5H14M6 6.5H14"/></g><g stroke="#000" stroke-width="1.2"><path d="M2 2.5H3.6M5 2.5H14M9 9.5H14M5 12.5H14"/></g></svg>
<svg class="a" style="left:911px;top:61px" width="17" height="16" viewBox="0 0 17 16"><rect x="1.5" y=".5" width="15" height="15" fill="url(#gDoc)" stroke="#5c78a8" stroke-width="1"/><path d="M16.5 1V15.5H2" fill="none" stroke="#3c5480" stroke-width="1"/>
<g stroke="#b4b8b4" stroke-width="1"><path d="M8 5H15M7 7.5H15"/></g><g stroke="#000" stroke-width="1.2"><path d="M6 2.5H15M10 10.5H15M6 13.5H15"/></g>
<path d="M.6 3.6V.8H4" fill="none" stroke="#2848c8" stroke-width="1.4"/><path d="M1.6 1.6C5.6 1 8 3.6 5.6 7.4" fill="none" stroke="#3a5cd8" stroke-width="1.3"/></svg>
<div class="a" style="left:932px;top:59px;width:23px;height:20px;border:1px solid #5c5c5c;border-radius:4px;background:linear-gradient(#cfcfcf,#e2e2e2 45%,#d9d9d9 55%,#e6e6e6);box-shadow:inset 0 0 1px 0 rgba(0,0,0,.45)"></div>
<svg class="a" style="left:937px;top:62px" width="15" height="15" viewBox="0 0 15 15"><rect x=".6" y="5.4" width="12.8" height="8.4" fill="url(#gDoc)" stroke="#506898" stroke-width=".9"/><path d="M13.4 6V13.8H1" fill="none" stroke="#283c68" stroke-width="1"/>
<rect x=".6" y=".6" width="13" height="4" fill="#fff" stroke="#4070d8" stroke-width="1.1"/>
<rect x="2.4" y="2.1" width="1" height="1" fill="#101010"/><rect x="4.4" y="2.1" width="2" height="1" fill="#283c68"/><rect x="7.4" y="2" width="4.8" height="1.2" fill="#f08818"/>
<g stroke="#2c4878" stroke-width="1"><path d="M2.4 7.6H5.2M2.4 9.8H9M2.4 12H11"/></g></svg>
<div class="a" style="left:426px;top:81px;width:842px;height:1px;background:#b8bac0"></div>
<div class="a" style="left:426px;top:82px;width:842px;height:720px;background:#fff;border:1px solid #7a8090"></div>
<div class="a" style="left:427px;top:83px;width:56px;height:715px;background:#e4e4dc"></div>
<div class="a" style="left:483px;top:83px;width:14px;height:715px;background:#f3f3f3 conic-gradient(#e6e6e6 25%,#fff 0 50%,#e6e6e6 0 75%,#fff 0) 0 0/2px 2px"></div>
<svg class="a" style="left:485px;top:86px" width="11" height="11" viewBox="0 0 11 11"><rect x=".5" y=".5" width="10" height="10" fill="#fff" stroke="#000" stroke-width="1"/><path d="M2.5 5.5H8.5" stroke="#000" stroke-width="1"/></svg>
<div class="a" style="left:490px;top:97px;width:1px;height:218px;background:#000"></div><div class="a" style="left:490px;top:314px;width:6px;height:1px;background:#000"></div>
<svg class="a" style="left:485px;top:390px" width="11" height="11" viewBox="0 0 11 11"><rect x=".5" y=".5" width="10" height="10" fill="#fff" stroke="#000" stroke-width="1"/><path d="M2.5 5.5H8.5" stroke="#000" stroke-width="1"/></svg>
<div class="a" style="left:490px;top:401px;width:1px;height:122px;background:#000"></div><div class="a" style="left:490px;top:522px;width:6px;height:1px;background:#000"></div>
<svg class="a" style="left:485px;top:550px" width="11" height="11" viewBox="0 0 11 11"><rect x=".5" y=".5" width="10" height="10" fill="#fff" stroke="#000" stroke-width="1"/><path d="M2.5 5.5H8.5" stroke="#000" stroke-width="1"/></svg>
<div class="a" style="left:490px;top:561px;width:1px;height:234px;background:#000"></div><div class="a" style="left:490px;top:794px;width:6px;height:1px;background:#000"></div>
<div class="ln" style="top:84px">1</div>
<div class="code" style="top:84px"><span class="k">module</span> Divider_top(</div>
<div class="ln" style="top:100px">2</div>
<div class="code" style="top:100px"><span class="k">input</span> clk,<span class="c">//<span class="cj">时钟</span></span></div>
<div class="ln" style="top:116px">3</div>
<div class="code" style="top:116px"><span class="k">input</span> div_en,<span class="c">//<span class="cj">开始计算信号</span>,<span class="cj">为低电平开始</span></span></div>
<div class="ln" style="top:132px">4</div>
<div class="code" style="top:132px"><span class="k">input</span> [<span class="n">7</span>:<span class="n">0</span>] Divisor_SW,<span class="c">//<span class="cj">被除数</span> ,Divisor/dividend</span></div>
<div class="ln" style="top:148px">5</div>
<div class="code" style="top:148px"><span class="k">input</span> [<span class="n">7</span>:<span class="n">0</span>] dividend_SW,<span class="c">//<span class="cj">除数</span></span></div>
<div class="ln" style="top:164px">6</div>
<div class="code" style="top:164px"><span class="k">output</span>  [<span class="n">7</span>:<span class="n">0</span>] HEX0,<span class="c">//<span class="cj">数码管</span>-<span class="cj">低亮</span></span></div>
<div class="ln" style="top:180px">7</div>
<div class="code" style="top:180px"><span class="k">output</span>  [<span class="n">7</span>:<span class="n">0</span>] HEX1,<span class="c">//<span class="cj">数码管</span>-<span class="cj">低亮</span></span></div>
<div class="ln" style="top:196px">8</div>
<div class="code" style="top:196px"><span class="k">output</span>  [<span class="n">7</span>:<span class="n">0</span>] HEX2,<span class="c">//<span class="cj">数码管</span>-<span class="cj">低亮</span></span></div>
<div class="ln" style="top:212px">9</div>
<div class="code" style="top:212px"><span class="k">output</span>  [<span class="n">7</span>:<span class="n">0</span>] HEX3,<span class="c">//<span class="cj">数码管</span>-<span class="cj">低亮</span></span></div>
<div class="ln" style="top:228px">10</div>
<div class="code" style="top:228px"><span class="k">output</span>  [<span class="n">7</span>:<span class="n">0</span>] HEX4,<span class="c">//<span class="cj">数码管</span>-<span class="cj">低亮</span></span></div>
<div class="ln" style="top:244px">11</div>
<div class="code" style="top:244px"><span class="k">output</span>  [<span class="n">7</span>:<span class="n">0</span>] HEX5,<span class="c">//<span class="cj">数码管</span>-<span class="cj">低亮</span></span></div>
<div class="ln" style="top:260px">12</div>
<div class="code" style="top:260px"><span class="k">output</span>  [<span class="n">7</span>:<span class="n">0</span>] HEX6,<span class="c">//<span class="cj">数码管</span>-<span class="cj">低亮</span></span></div>
<div class="ln" style="top:276px">13</div>
<div class="code" style="top:276px"><span class="k">output</span>  [<span class="n">7</span>:<span class="n">0</span>] HEX7 <span class="c">//<span class="cj">数码管</span>-<span class="cj">低亮</span></span></div>
<div class="ln" style="top:292px">14</div>
<div class="code" style="top:292px">);</div>
<div class="ln" style="top:308px">15</div>
<div class="ln" style="top:324px">16</div>
<div class="code" style="top:324px"><span class="k">wire</span> [<span class="n">7</span>:<span class="n">0</span>] shang;<span class="c">//<span class="cj">商</span></span></div>
<div class="ln" style="top:340px">17</div>
<div class="code" style="top:340px"><span class="k">wire</span> [<span class="n">7</span>:<span class="n">0</span>] yushu;<span class="c">//<span class="cj">余数</span></span></div>
<div class="ln" style="top:356px">18</div>
<div class="ln" style="top:372px">19</div>
<div class="code" style="top:372px"><span class="c">//<span class="cj">除法模块</span></span></div>
<div class="ln" style="top:388px">20</div>
<div class="code" style="top:388px">Divider_8bit i_Divider_8bit(</div>
<div class="ln" style="top:404px">21</div>
<div class="code" style="top:404px">. clk(clk),<span class="c">//<span class="cj">时钟</span></span></div>
<div class="ln" style="top:420px">22</div>
<div class="code" style="top:420px">. div_en(div_en),<span class="c">//<span class="cj">开始计算信号</span>,<span class="cj">为高电平开始</span></span></div>
<div class="ln" style="top:436px">23</div>
<div class="code" style="top:436px">. Divisor(Divisor_SW),<span class="c">//<span class="cj">被除数</span> ,Divisor/dividend</span></div>
<div class="ln" style="top:452px">24</div>
<div class="code" style="top:452px">. dividend(dividend_SW),<span class="c">//<span class="cj">除数</span></span></div>
<div class="ln" style="top:468px">25</div>
<div class="code" style="top:468px">. shang(shang),<span class="c">//<span class="cj">商</span></span></div>
<div class="ln" style="top:484px">26</div>
<div class="code" style="top:484px">. yushu(yushu)<span class="c">//<span class="cj">余数</span></span></div>
<div class="ln" style="top:500px">27</div>
<div class="code" style="top:500px">);</div>
<div class="ln" style="top:516px">28</div>
<div class="ln" style="top:532px">29</div>
<div class="code" style="top:532px"><span class="c">//<span class="cj">显示模块</span></span></div>
<div class="ln" style="top:548px">30</div>
<div class="code" style="top:548px">display i_display(</div>
<div class="ln" style="top:564px">31</div>
<div class="code" style="top:564px">. clk(clk),</div>
<div class="ln" style="top:580px">32</div>
<div class="code" style="top:580px">. Divisor_SW(Divisor_SW),<span class="c">//<span class="cj">被除数</span> ,Divisor/dividend</span></div>
<div class="ln" style="top:596px">33</div>
<div class="code" style="top:596px">. dividend_SW(dividend_SW),<span class="c">//<span class="cj">除数</span></span></div>
<div class="ln" style="top:612px">34</div>
<div class="code" style="top:612px">. shang(shang),<span class="c">//<span class="cj">商</span></span></div>
<div class="ln" style="top:628px">35</div>
<div class="code" style="top:628px">. yushu(yushu),<span class="c">//<span class="cj">余数</span></span></div>
<div class="ln" style="top:644px">36</div>
<div class="code" style="top:644px">. HEX0(HEX0),<span class="c">//<span class="cj">数码管</span>-<span class="cj">低亮</span></span></div>
<div class="ln" style="top:660px">37</div>
<div class="code" style="top:660px">. HEX1(HEX1),<span class="c">//<span class="cj">数码管</span>-<span class="cj">低亮</span></span></div>
<div class="ln" style="top:676px">38</div>
<div class="code" style="top:676px">. HEX2(HEX2),<span class="c">//<span class="cj">数码管</span>-<span class="cj">低亮</span></span></div>
<div class="ln" style="top:692px">39</div>
<div class="code" style="top:692px">. HEX3(HEX3),<span class="c">//<span class="cj">数码管</span>-<span class="cj">低亮</span></span></div>
<div class="ln" style="top:708px">40</div>
<div class="code" style="top:708px">. HEX4(HEX4),<span class="c">//<span class="cj">数码管</span>-<span class="cj">低亮</span></span></div>
<div class="ln" style="top:724px">41</div>
<div class="code" style="top:724px">. HEX5(HEX5),<span class="c">//<span class="cj">数码管</span>-<span class="cj">低亮</span></span></div>
<div class="ln" style="top:740px">42</div>
<div class="code" style="top:740px">. HEX6(HEX6),<span class="c">//<span class="cj">数码管</span>-<span class="cj">低亮</span></span></div>
<div class="ln" style="top:756px">43</div>
<div class="code" style="top:756px">. HEX7(HEX7) <span class="c">//<span class="cj">数码管</span>-<span class="cj">低亮</span></span></div>
<div class="ln" style="top:772px">44</div>
<div class="code" style="top:772px">);</div>
<div class="ln" style="top:788px">45</div>
<svg width="0" height="0" style="position:absolute"><defs>
<linearGradient id="gBlue" x1="0" y1="0" x2="1" y2="1"><stop offset="0" stop-color="#b4d0f4"/><stop offset="1" stop-color="#3a6ad0"/></linearGradient>
<linearGradient id="gPurple" x1="0" y1="0" x2="1" y2="1"><stop offset="0" stop-color="#d8a0e8"/><stop offset="0.45" stop-color="#b060c8"/><stop offset="1" stop-color="#6c2088"/></linearGradient>
<linearGradient id="gYellow" x1="0" y1="0" x2="1" y2="1"><stop offset="0" stop-color="#ffe060"/><stop offset="1" stop-color="#f0a800"/></linearGradient>
<linearGradient id="gDoc" x1="0" y1="0" x2="1" y2="1"><stop offset="0" stop-color="#ffffff"/><stop offset="1" stop-color="#b8ccf0"/></linearGradient>
<linearGradient id="gGreen" x1="0" y1="0" x2="0" y2="1"><stop offset="0" stop-color="#0a5a18"/><stop offset="0.3" stop-color="#3c9848"/><stop offset="1" stop-color="#74c878"/></linearGradient>
<linearGradient id="gClock" x1="0" y1="0" x2="1" y2="1"><stop offset="0" stop-color="#c4d4f8"/><stop offset="1" stop-color="#4c70d0"/></linearGradient>
<linearGradient id="gGray" x1="0" y1="0" x2="1" y2="0"><stop offset="0" stop-color="#8a8a84"/><stop offset="0.45" stop-color="#ffffff"/><stop offset="1" stop-color="#6a6a64"/></linearGradient>
<linearGradient id="gScroll" x1="0" y1="0" x2="0" y2="1"><stop offset="0" stop-color="#d8ccb4"/><stop offset="0.6" stop-color="#b8a488"/><stop offset="1" stop-color="#806050"/></linearGradient>
<linearGradient id="gPyr" x1="0" y1="0" x2="1" y2="1"><stop offset="0" stop-color="#fff060"/><stop offset="0.5" stop-color="#ffd838"/><stop offset="1" stop-color="#f4a818"/></linearGradient>
<linearGradient id="gPyrR" x1="0" y1="0" x2="1" y2="1"><stop offset="0" stop-color="#f09810"/><stop offset="1" stop-color="#80501c"/></linearGradient>
</defs></svg>
<svg class="a" style="left:4px;top:10px" width="3" height="20" viewBox="0 0 3 20"><rect x="0" y="1" width="2" height="2" fill="#b8b8b8"/><rect x="1" y="0" width="1" height="1" fill="#d8d8d8"/><rect x="0" y="5" width="2" height="2" fill="#b8b8b8"/><rect x="1" y="4" width="1" height="1" fill="#d8d8d8"/><rect x="0" y="9" width="2" height="2" fill="#b8b8b8"/><rect x="1" y="8" width="1" height="1" fill="#d8d8d8"/><rect x="0" y="13" width="2" height="2" fill="#b8b8b8"/><rect x="1" y="12" width="1" height="1" fill="#d8d8d8"/><rect x="0" y="17" width="2" height="2" fill="#b8b8b8"/><rect x="1" y="16" width="1" height="1" fill="#d8d8d8"/></svg>
<div class="a" style="left:10px;top:9px;width:23px;height:20px;border:1px solid #5c5c5c;border-radius:4px;background:linear-gradient(#cfcfcf,#e2e2e2 45%,#d9d9d9 55%,#e6e6e6);box-shadow:inset 0 0 1px 0 rgba(0,0,0,.45)"></div>
<div class="a" style="left:79px;top:9px;width:23px;height:20px;border:1px solid #5c5c5c;border-radius:4px;background:linear-gradient(#cfcfcf,#e2e2e2 45%,#d9d9d9 55%,#e6e6e6);box-shadow:inset 0 0 1px 0 rgba(0,0,0,.45)"></div>
<div class="a" style="left:102px;top:9px;width:23px;height:20px;border:1px solid #5c5c5c;border-radius:4px;background:linear-gradient(#cfcfcf,#e2e2e2 45%,#d9d9d9 55%,#e6e6e6);box-shadow:inset 0 0 1px 0 rgba(0,0,0,.45)"></div>
<div class="a" style="left:148px;top:9px;width:23px;height:20px;border:1px solid #5c5c5c;border-radius:4px;background:linear-gradient(#cfcfcf,#e2e2e2 45%,#d9d9d9 55%,#e6e6e6);box-shadow:inset 0 0 1px 0 rgba(0,0,0,.45)"></div>
<svg class="a" style="left:14px;top:11px" width="16" height="17" viewBox="0 0 16 17"><g stroke="#f4406e" stroke-width="2.6" stroke-linecap="round"><path d="M2.6 3.4L13.6 14.4M13.6 3.4L2.6 14.4"/></g>
<g stroke="#fbd0dc" stroke-width=".8" stroke-dasharray="1 1.2"><path d="M2.6 3.4L13.6 14.4M13.6 3.4L2.6 14.4"/></g>
<g fill="#e8204e"><circle cx="8.1" cy="1.4" r=".8"/><circle cx="8.1" cy="16.2" r=".8"/><circle cx="1" cy="8.9" r=".8"/><circle cx="15.2" cy="8.9" r=".8"/></g>
<g fill="#f890a8"><circle cx="1.2" cy="2.2" r=".7"/><circle cx="15" cy="2.2" r=".7"/><circle cx="1.2" cy="15.6" r=".7"/><circle cx="15" cy="15.6" r=".7"/></g>
<path d="M8.1 5.6L12.9 10L8.1 14.6L3.3 10Z" fill="#0a1420"/><path d="M8.1 4.6L12.9 9.2L8.1 13.4L3.3 9.2Z" fill="url(#gBlue)"/></svg>
<svg class="a" style="left:36px;top:11px" width="16" height="16" viewBox="0 0 16 16"><path d="M5 1.6L9.8 5.8L5 10.4L.2 5.8Z" fill="#0a1420"/><path d="M5 .2L9.8 4.8L5 9L.2 4.8Z" fill="url(#gBlue)"/>
<rect x=".4" y="8.6" width="5.8" height="6.8" rx=".8" fill="url(#gGray)" stroke="#77776f" stroke-width=".5"/><rect x="1.4" y="8.8" width="3.6" height="1.4" fill="#fff"/>
<rect x="9" y="7.6" width="6.2" height="7.8" rx=".8" fill="url(#gGray)" stroke="#77776f" stroke-width=".5"/><rect x="9.4" y="4.2" width="4.6" height="3.8" rx="1" fill="url(#gGray)" stroke="#88887f" stroke-width=".5"/><rect x="10" y="1.8" width="3" height="2.8" rx="1.2" fill="url(#gGray)" stroke="#88887f" stroke-width=".5"/>
<rect x="6" y="9" width="3.2" height="2.2" fill="#3c3c3a"/><rect x=".4" y="14.4" width="5.8" height="1.1" fill="#4a4a46"/><rect x="9" y="14.4" width="6.2" height="1.1" fill="#4a4a46"/><rect x=".6" y="10.2" width="5.4" height=".8" fill="#5a5a56"/><rect x="9.2" y="9.6" width="5.8" height=".8" fill="#5a5a56"/></svg>
<svg class="a" style="left:58px;top:11px" width="17" height="16" viewBox="0 0 17 16"><rect x="1.6" y="2.6" width="13" height="12.6" fill="url(#gDoc)" stroke="#264a80" stroke-width="1.2"/>
<rect x="3" y="3.8" width="1.8" height="1.6" fill="#5080e0"/><rect x="6" y="3.8" width="1.8" height="1.6" fill="#f08020"/>
<path d="M1.4 15.4C3 10.4 7.4 4.6 12.6 1.2C15.2 -.2 16.6 1.2 15.4 3.6C13 8 8 11.4 4.2 13.4Z" fill="#2a4ec0"/>
<path d="M3.4 13C6 9 9.6 5.4 13.6 2.6" stroke="#e4ecff" stroke-width="1" fill="none"/><path d="M6 12C9 10 12 7.4 14.4 4.4" stroke="#7090e0" stroke-width=".8" fill="none"/></svg>
<svg class="a" style="left:82px;top:11px" width="18" height="18" viewBox="0 0 18 18"><path d="M4.4 2.6H16.4V14.2L14 16.6H4.4Z" fill="url(#gYellow)" stroke="#3a5078" stroke-width="1"/>
<path d="M4.4 2.6H9" stroke="#ffe890" stroke-width="1"/>
<circle cx="15.4" cy="15.4" r="1.6" fill="#e8f0ff" stroke="#28446c" stroke-width=".9"/>
<circle cx="4.6" cy="5.4" r="2.8" fill="#dfe6ea" fill-opacity=".0" stroke="#2c5480" stroke-width="1.4"/>
<rect x="1.4" y="1" width="4" height="3.6" fill="#78c080" stroke="#2c5c58" stroke-width=".9"/>
<circle cx="7.6" cy="7.8" r="1" fill="#e8f0ff" stroke="#28446c" stroke-width=".7"/><path d="M5 9V12M5 9H6.4" stroke="#3a5078" stroke-width=".8" stroke-dasharray="1 .8" fill="none"/></svg>
<svg class="a" style="left:106px;top:11px" width="16" height="17" viewBox="0 0 16 17"><rect x=".6" y=".6" width="14.8" height="5.4" fill="#d8e4fc" stroke="#5a6470" stroke-width="1.1"/><rect x="1.2" y="1.2" width="8.8" height="4.2" fill="#5cb45c"/><path d="M2 4.6V3.6M4 4.6V3.6M6 4.6V3.6M8 4.6V3.6" stroke="#a8dca8" stroke-width="1"/>
<rect x=".6" y="7.8" width="14.8" height="5.4" fill="#d8e4fc" stroke="#5a6470" stroke-width="1.1"/><rect x="1.2" y="8.4" width="5" height="4.2" fill="#5cb45c"/><path d="M2.6 11.8V10.8M4.4 11.8V10.8" stroke="#a8dca8" stroke-width="1"/>
<rect x="0" y="15.2" width="16" height="1.2" fill="#1830c0"/><g fill="#2848d0"><rect x="0" y="14.2" width="1" height="1"/><rect x="3" y="14.2" width="1" height="1"/><rect x="6" y="14.2" width="1" height="1"/><rect x="9" y="14.2" width="1" height="1"/><rect x="12" y="14.2" width="1" height="1"/><rect x="15" y="14.2" width="1" height="1"/></g></svg>
<svg class="a" style="left:128px;top:11px" width="16" height="17" viewBox="0 0 16 17"><path d="M1.6 5.2C3.6 .6 9.4 .2 11.6 3.6L13.6 2.6L15.4 8.4L9.4 10.4L10.2 7.6L8.6 6C7.6 4.4 5 4.2 4 6.4Z" fill="#ec2c5c"/><path d="M2.4 4.8C4.4 1.6 8.6 1.4 10.8 3.6" stroke="#f890a8" stroke-width=".9" fill="none"/>
<path d="M13.8 11C11.8 15.8 6.4 16.2 4 12.6L2 13.6L.4 7.8L6.4 5.8L5.6 8.6L7.2 10.2C8.2 11.8 10.8 12 11.8 9.8Z" fill="#6c98d8"/><path d="M13.8 11C11.8 15.8 6.4 16.2 4 12.6L4.6 12.2C7.2 14.6 10.8 13.8 12.4 10.4Z" fill="#284c98"/><path d="M1.4 8.4L5.4 7" stroke="#c8dcf8" stroke-width=".9"/></svg>
<svg class="a" style="left:151px;top:11px" width="17" height="16" viewBox="0 0 17 16"><path d="M2.6 .6H10.8L13.4 3.2V15.4H2.6Z" fill="url(#gDoc)" stroke="#5a78a8" stroke-width="1"/>
<g stroke="#203870" stroke-width="1.1"><path d="M4.4 3.2H8.6M4.4 5.4H8.6M4.4 7.6H7.4"/></g>
<path d="M1.6 9.6L3.8 8L6.4 11L13.4 3.6L15.6 5.6L6.6 15Z" fill="#4caf50" stroke="#2e8b3a" stroke-width=".7"/></svg>
<svg class="a" style="left:380px;top:37px" width="8" height="10" viewBox="0 0 8 10"><rect x="1.5" y=".5" width="4" height="6" fill="#f4f4f4" stroke="#28343c" stroke-width="1"/><path d="M5 0V6.5" stroke="#000" stroke-width="1.8"/><path d="M0 6.5H7M3.5 7V10" stroke="#000" stroke-width="1.1"/></svg><svg class="a" style="left:392px;top:38px" width="8" height="9" viewBox="0 0 8 9"><path d="M2.6 3V.9H7.4V4.9H6" fill="none" stroke="#000" stroke-width="1.2"/><path d="M2 1H8" stroke="#000" stroke-width="2"/><rect x=".6" y="3.6" width="4.8" height="4.8" fill="#f4f4f4" stroke="#000" stroke-width="1.2"/><path d="M0 4H6" stroke="#000" stroke-width="2"/></svg><svg class="a" style="left:406px;top:39px" width="8" height="7" viewBox="0 0 8 7"><path d="M.6 .4L7.4 6.6M7.4 .4L.6 6.6" stroke="#000" stroke-width="1.45"/></svg>
<svg class="a" style="left:380px;top:329px" width="8" height="10" viewBox="0 0 8 10"><rect x="1.5" y=".5" width="4" height="6" fill="#f4f4f4" stroke="#28343c" stroke-width="1"/><path d="M5 0V6.5" stroke="#000" stroke-width="1.8"/><path d="M0 6.5H7M3.5 7V10" stroke="#000" stroke-width="1.1"/></svg><svg class="a" style="left:392px;top:330px" width="8" height="9" viewBox="0 0 8 9"><path d="M2.6 3V.9H7.4V4.9H6" fill="none" stroke="#000" stroke-width="1.2"/><path d="M2 1H8" stroke="#000" stroke-width="2"/><rect x=".6" y="3.6" width="4.8" height="4.8" fill="#f4f4f4" stroke="#000" stroke-width="1.2"/><path d="M0 4H6" stroke="#000" stroke-width="2"/></svg><svg class="a" style="left:406px;top:331px" width="8" height="7" viewBox="0 0 8 7"><path d="M.6 .4L7.4 6.6M7.4 .4L.6 6.6" stroke="#000" stroke-width="1.45"/></svg>
<svg class="a" style="left:380px;top:565px" width="8" height="10" viewBox="0 0 8 10"><rect x="1.5" y=".5" width="4" height="6" fill="#f4f4f4" stroke="#28343c" stroke-width="1"/><path d="M5 0V6.5" stroke="#000" stroke-width="1.8"/><path d="M0 6.5H7M3.5 7V10" stroke="#000" stroke-width="1.1"/></svg><svg class="a" style="left:392px;top:566px" width="8" height="9" viewBox="0 0 8 9"><path d="M2.6 3V.9H7.4V4.9H6" fill="none" stroke="#000" stroke-width="1.2"/><path d="M2 1H8" stroke="#000" stroke-width="2"/><rect x=".6" y="3.6" width="4.8" height="4.8" fill="#f4f4f4" stroke="#000" stroke-width="1.2"/><path d="M0 4H6" stroke="#000" stroke-width="2"/></svg><svg class="a" style="left:406px;top:567px" width="8" height="7" viewBox="0 0 8 7"><path d="M.6 .4L7.4 6.6M7.4 .4L.6 6.6" stroke="#000" stroke-width="1.45"/></svg>
<svg class="a" style="left:5px;top:78px" width="17" height="15" viewBox="0 0 17 15"><path d="M6.5 .5L16 10.2L12.5 13.6L6.5 8Z" fill="#c47a14"/><path d="M6.5 .5L16 10.2L12.5 13.6Z" fill="url(#gPyrR)" stroke="#5c78b0" stroke-width=".7" stroke-linejoin="round"/>
<path d="M6.5 .5L12.5 13.5H.3Z" fill="url(#gPyr)" stroke="#5878b0" stroke-width=".7" stroke-linejoin="round"/>
<path d="M.3 13.6H12.5L16 10.2" fill="none" stroke="#28446c" stroke-width="1"/>
<path d="M6.5 6V8" stroke="#182848" stroke-width="1"/><rect x="6" y="4.8" width="1.1" height="1.3" fill="#e01848"/><rect x="6" y="10.6" width="1.1" height="1.5" fill="#e01848"/>
<g fill="#2c50c8"><rect x="4.9" y="8.4" width="1" height="1.5"/><rect x="7.1" y="8.4" width="1" height="1.5"/><rect x="3.9" y="10.6" width="1" height="1.5"/><rect x="8.2" y="10.6" width="1" height="1.5"/></g></svg>
<svg class="a" style="left:26px;top:98px" width="15" height="16" viewBox="0 0 15 16"><rect x=".5" y=".5" width="13.4" height="10.4" fill="#bcd2f2" stroke="#a8bcd8" stroke-width="1"/>
<path d="M.5 11H14V.8" fill="none" stroke="#56667e" stroke-width="1"/><rect x="1" y="1" width="12.4" height="1.6" fill="#dce8fa"/>
<text x="7.2" y="8.8" font-family="Liberation Sans,sans-serif" font-size="9.6" text-anchor="middle" fill="#18222e" textLength="13.6" lengthAdjust="spacingAndGlyphs">abc</text>
<path d="M.8 11.4V14.2Q1.5 15.6 2.3 14.2V11.4" fill="#fff" stroke="#2848c8" stroke-width=".8"/></svg>
<svg class="a" style="left:46px;top:118px" width="15" height="16" viewBox="0 0 15 16"><rect x=".5" y=".5" width="13.4" height="10.4" fill="#bcd2f2" stroke="#a8bcd8" stroke-width="1"/>
<path d="M.5 11H14V.8" fill="none" stroke="#56667e" stroke-width="1"/><rect x="1" y="1" width="12.4" height="1.6" fill="#dce8fa"/>
<text x="7.2" y="8.8" font-family="Liberation Sans,sans-serif" font-size="9.6" text-anchor="middle" fill="#18222e" textLength="13.6" lengthAdjust="spacingAndGlyphs">abc</text>
<path d="M.8 11.4V14.2Q1.5 15.6 2.3 14.2V11.4" fill="#fff" stroke="#2848c8" stroke-width=".8"/></svg>
<svg class="a" style="left:46px;top:138px" width="15" height="16" viewBox="0 0 15 16"><rect x=".5" y=".5" width="13.4" height="10.4" fill="#bcd2f2" stroke="#a8bcd8" stroke-width="1"/>
<path d="M.5 11H14V.8" fill="none" stroke="#56667e" stroke-width="1"/><rect x="1" y="1" width="12.4" height="1.6" fill="#dce8fa"/>
<text x="7.2" y="8.8" font-family="Liberation Sans,sans-serif" font-size="9.6" text-anchor="middle" fill="#18222e" textLength="13.6" lengthAdjust="spacingAndGlyphs">abc</text>
<path d="M.8 11.4V14.2Q1.5 15.6 2.3 14.2V11.4" fill="#fff" stroke="#2848c8" stroke-width=".8"/></svg>
<svg class="a" style="left:106px;top:97px" width="16" height="15" viewBox="0 0 16 15"><rect x="4" y=".6" width="4" height="1.8" fill="#e02058"/><path d="M6 2.4V5.4M2.6 8.4V5.4H10.4V7" stroke="#5070a0" stroke-width="1" fill="none"/>
<rect x=".4" y="8.4" width="3.4" height="1.6" fill="#e8d020"/>
<rect x="6.6" y="7" width="8" height="6.6" fill="#fff" stroke="#e01050" stroke-width="1.2"/><rect x="9" y="9.2" width="3.6" height="1.8" fill="#50a050"/></svg>
<svg class="a" style="left:10px;top:103px" width="7" height="7" viewBox="0 0 7 7"><path d="M5.8 1.2V5.8H1.2Z" fill="#484848" stroke="#202020" stroke-width=".9" stroke-linejoin="round"/></svg>
<svg class="a" style="left:31px;top:141px" width="6" height="10" viewBox="0 0 6 10"><path d="M.7 .9L5 5L.7 9.1Z" fill="#fff" stroke="#a0a0a0" stroke-width="1"/></svg>
<svg class="a" style="left:12px;top:298px" width="17" height="15" viewBox="0 0 17 15"><path d="M6.5 .5L16 10.2L12.5 13.6L6.5 8Z" fill="#c47a14"/><path d="M6.5 .5L16 10.2L12.5 13.6Z" fill="url(#gPyrR)" stroke="#5c78b0" stroke-width=".7" stroke-linejoin="round"/>
<path d="M6.5 .5L12.5 13.5H.3Z" fill="url(#gPyr)" stroke="#5878b0" stroke-width=".7" stroke-linejoin="round"/>
<path d="M.3 13.6H12.5L16 10.2" fill="none" stroke="#28446c" stroke-width="1"/>
<path d="M6.5 6V8" stroke="#182848" stroke-width="1"/><rect x="6" y="4.8" width="1.1" height="1.3" fill="#e01848"/><rect x="6" y="10.6" width="1.1" height="1.5" fill="#e01848"/>
<g fill="#2c50c8"><rect x="4.9" y="8.4" width="1" height="1.5"/><rect x="7.1" y="8.4" width="1" height="1.5"/><rect x="3.9" y="10.6" width="1" height="1.5"/><rect x="8.2" y="10.6" width="1" height="1.5"/></g></svg>
<svg class="a" style="left:104px;top:298px" width="13" height="16" viewBox="0 0 13 16"><path d="M.6 .6H8.6L12 4V15.4H.6Z" fill="url(#gDoc)" stroke="#5a70a4" stroke-width="1"/><path d="M12 4.4V15.4H1" fill="none" stroke="#38507c" stroke-width="1"/><path d="M8.6 .6V4H12" fill="#fff" stroke="#5a70a4" stroke-width=".8"/>
<g stroke="#1620a8" stroke-width="1.2"><path d="M2.4 2.6H7.4M2.4 4.8H8.4M2.4 7H10.2M2.4 9.2H10.2M2.4 11.4H10.2M2.4 13.4H10.2"/></g></svg>
<svg class="a" style="left:169px;top:300px" width="12" height="12" viewBox="0 0 12 12"><rect x="6.2" y=".6" width="4.8" height="4.8" fill="#7c9ce0" stroke="#6080c0" stroke-width=".8"/><rect x="6.8" y="1.2" width="3.6" height="1.6" fill="#b8ccf4"/>
<rect x="3.4" y="3.6" width="4.6" height="4.6" fill="#f8d030" stroke="#c8a020" stroke-width=".8"/>
<rect x=".6" y="6.6" width="4.6" height="4.8" fill="#f4f8ff" stroke="#6078a8" stroke-width=".9"/><path d="M.6 11.4H5.2V6.6" fill="none" stroke="#384c78" stroke-width=".9"/></svg>
<svg class="a" style="left:270px;top:298px" width="16" height="16" viewBox="0 0 16 16"><path d="M6 6L14.4 14.6" stroke="#4868c0" stroke-width="2.2" stroke-linecap="round"/><path d="M6.4 6.4L13.8 14" stroke="#a8c0f0" stroke-width=".8"/>
<g fill="#e84010"><rect x="1" y="1" width="1.4" height="1.4"/><rect x="5" y="0" width="1.4" height="1.4"/><rect x="9" y="1.6" width="1.4" height="1.4"/><rect x="1.6" y="5.4" width="1.4" height="1.4"/></g>
<g fill="#f0b000"><rect x="3.4" y="3" width="1.4" height="1.4"/><rect x="7" y="3.4" width="1.4" height="1.4"/><rect x="4.4" y="7" width="1.2" height="1.2"/></g></svg>
<div class="a" style="left:388px;top:303px;width:2px;height:9px;background:#6080d0"></div>
<svg class="a" style="left:308px;top:386px" width="10" height="12" viewBox="0 0 10 12"><rect x="3.7" y=".2" width="2.6" height="2.4" rx="1.1" fill="#e4ecfc" stroke="#7088c0" stroke-width=".7"/>
<circle cx="5" cy="7" r="4.4" fill="url(#gClock)" stroke="#4868b8" stroke-width=".9"/><circle cx="4.8" cy="6.8" r="2.7" fill="#f2f6ff"/>
<path d="M4.6 4.8V7.2L5.8 8.4" stroke="#2038a0" stroke-width="1" fill="none"/></svg>
<svg class="a" style="left:263px;top:588px" width="10" height="12" viewBox="0 0 10 12"><rect x="3.7" y=".2" width="2.6" height="2.4" rx="1.1" fill="#e4ecfc" stroke="#7088c0" stroke-width=".7"/>
<circle cx="5" cy="7" r="4.4" fill="url(#gClock)" stroke="#4868b8" stroke-width=".9"/><circle cx="4.8" cy="6.8" r="2.7" fill="#f2f6ff"/>
<path d="M4.6 4.8V7.2L5.8 8.4" stroke="#2038a0" stroke-width="1" fill="none"/></svg>
<svg class="a" style="left:4px;top:408px" width="16" height="12" viewBox="0 0 16 12"><path d="M.8 6.6L3 4.8L5.6 7.8L13.4 .8L14.8 2.2L5.8 11.4Z" fill="#5cb860" stroke="#3a9a44" stroke-width=".8" stroke-linejoin="round"/><path d="M1.6 6.6L3 5.6L5.6 8.6L13.4 1.6" stroke="#a4e0a4" stroke-width=".7" fill="none"/></svg>
<svg class="a" style="left:67px;top:408px" width="11" height="12" viewBox="0 0 11 12"><path d="M1.6 1.2L10.6 6L1.6 11.4Z" fill="#b0a0b8" opacity=".35"/><path d="M.8 .2L9.9 5.4L.8 10.8Z" fill="url(#gPurple)"/><path d="M.7 0V11" stroke="#3c4c90" stroke-width="1"/></svg>
<svg class="a" style="left:49px;top:411px" width="7" height="7" viewBox="0 0 7 7"><path d="M5.8 1.2V5.8H1.2Z" fill="#484848" stroke="#202020" stroke-width=".9" stroke-linejoin="round"/></svg>
<svg class="a" style="left:4px;top:428px" width="16" height="12" viewBox="0 0 16 12"><path d="M.8 6.6L3 4.8L5.6 7.8L13.4 .8L14.8 2.2L5.8 11.4Z" fill="#5cb860" stroke="#3a9a44" stroke-width=".8" stroke-linejoin="round"/><path d="M1.6 6.6L3 5.6L5.6 8.6L13.4 1.6" stroke="#a4e0a4" stroke-width=".7" fill="none"/></svg>
<svg class="a" style="left:87px;top:428px" width="11" height="12" viewBox="0 0 11 12"><path d="M1.6 1.2L10.6 6L1.6 11.4Z" fill="#b0a0b8" opacity=".35"/><path d="M.8 .2L9.9 5.4L.8 10.8Z" fill="url(#gPurple)"/><path d="M.7 0V11" stroke="#3c4c90" stroke-width="1"/></svg>
<svg class="a" style="left:70px;top:430px" width="6" height="10" viewBox="0 0 6 10"><path d="M.7 .9L5 5L.7 9.1Z" fill="#fff" stroke="#a0a0a0" stroke-width="1"/></svg>
<svg class="a" style="left:4px;top:448px" width="16" height="12" viewBox="0 0 16 12"><path d="M.8 6.6L3 4.8L5.6 7.8L13.4 .8L14.8 2.2L5.8 11.4Z" fill="#5cb860" stroke="#3a9a44" stroke-width=".8" stroke-linejoin="round"/><path d="M1.6 6.6L3 5.6L5.6 8.6L13.4 1.6" stroke="#a4e0a4" stroke-width=".7" fill="none"/></svg>
<svg class="a" style="left:87px;top:448px" width="11" height="12" viewBox="0 0 11 12"><path d="M1.6 1.2L10.6 6L1.6 11.4Z" fill="#b0a0b8" opacity=".35"/><path d="M.8 .2L9.9 5.4L.8 10.8Z" fill="url(#gPurple)"/><path d="M.7 0V11" stroke="#3c4c90" stroke-width="1"/></svg>
<svg class="a" style="left:70px;top:450px" width="6" height="10" viewBox="0 0 6 10"><path d="M.7 .9L5 5L.7 9.1Z" fill="#fff" stroke="#a0a0a0" stroke-width="1"/></svg>
<svg class="a" style="left:4px;top:468px" width="16" height="12" viewBox="0 0 16 12"><path d="M.8 6.6L3 4.8L5.6 7.8L13.4 .8L14.8 2.2L5.8 11.4Z" fill="#5cb860" stroke="#3a9a44" stroke-width=".8" stroke-linejoin="round"/><path d="M1.6 6.6L3 5.6L5.6 8.6L13.4 1.6" stroke="#a4e0a4" stroke-width=".7" fill="none"/></svg>
<svg class="a" style="left:87px;top:468px" width="11" height="12" viewBox="0 0 11 12"><path d="M1.6 1.2L10.6 6L1.6 11.4Z" fill="#b0a0b8" opacity=".35"/><path d="M.8 .2L9.9 5.4L.8 10.8Z" fill="url(#gPurple)"/><path d="M.7 0V11" stroke="#3c4c90" stroke-width="1"/></svg>
<svg class="a" style="left:70px;top:470px" width="6" height="10" viewBox="0 0 6 10"><path d="M.7 .9L5 5L.7 9.1Z" fill="#fff" stroke="#a0a0a0" stroke-width="1"/></svg>
<svg class="a" style="left:4px;top:488px" width="16" height="12" viewBox="0 0 16 12"><path d="M.8 6.6L3 4.8L5.6 7.8L13.4 .8L14.8 2.2L5.8 11.4Z" fill="#5cb860" stroke="#3a9a44" stroke-width=".8" stroke-linejoin="round"/><path d="M1.6 6.6L3 5.6L5.6 8.6L13.4 1.6" stroke="#a4e0a4" stroke-width=".7" fill="none"/></svg>
<svg class="a" style="left:87px;top:488px" width="11" height="12" viewBox="0 0 11 12"><path d="M1.6 1.2L10.6 6L1.6 11.4Z" fill="#b0a0b8" opacity=".35"/><path d="M.8 .2L9.9 5.4L.8 10.8Z" fill="url(#gPurple)"/><path d="M.7 0V11" stroke="#3c4c90" stroke-width="1"/></svg>
<svg class="a" style="left:70px;top:490px" width="6" height="10" viewBox="0 0 6 10"><path d="M.7 .9L5 5L.7 9.1Z" fill="#fff" stroke="#a0a0a0" stroke-width="1"/></svg>
<svg class="a" style="left:4px;top:508px" width="16" height="12" viewBox="0 0 16 12"><path d="M.8 6.6L3 4.8L5.6 7.8L13.4 .8L14.8 2.2L5.8 11.4Z" fill="#5cb860" stroke="#3a9a44" stroke-width=".8" stroke-linejoin="round"/><path d="M1.6 6.6L3 5.6L5.6 8.6L13.4 1.6" stroke="#a4e0a4" stroke-width=".7" fill="none"/></svg>
<svg class="a" style="left:87px;top:508px" width="11" height="12" viewBox="0 0 11 12"><path d="M1.6 1.2L10.6 6L1.6 11.4Z" fill="#b0a0b8" opacity=".35"/><path d="M.8 .2L9.9 5.4L.8 10.8Z" fill="url(#gPurple)"/><path d="M.7 0V11" stroke="#3c4c90" stroke-width="1"/></svg>
<svg class="a" style="left:70px;top:510px" width="6" height="10" viewBox="0 0 6 10"><path d="M.7 .9L5 5L.7 9.1Z" fill="#fff" stroke="#a0a0a0" stroke-width="1"/></svg>
<svg class="a" style="left:63px;top:525px" width="18" height="18" viewBox="0 0 18 18"><path d="M9 5L17 11.2L9 17.4L1 11.2Z" fill="none" stroke="#080c14" stroke-width="1.6" stroke-dasharray="1.6 1.2"/><path d="M9 4.6L16.6 10.8L9 16.6L1.4 10.8Z" fill="#0c1424"/>
<path d="M9 3.2L17 9.8L9 15.6L1 9.8Z" fill="url(#gBlue)" stroke="#4868b0" stroke-width=".5"/>
<path d="M2 1H3.6V6.6H5.4V9.6" fill="none" stroke="#e01848" stroke-width="1.3"/>
<g stroke="#2030a8" stroke-width="1.1"><path d="M5 1.6V5.6M7 1.6V8.4M9 4V9.6M11 6V9.6"/></g><g stroke="#f0f4ff" stroke-width=".9"><path d="M6 2V8M8 3.4V9.4M10 5.6V9.4"/></g></svg>
</body></html>
